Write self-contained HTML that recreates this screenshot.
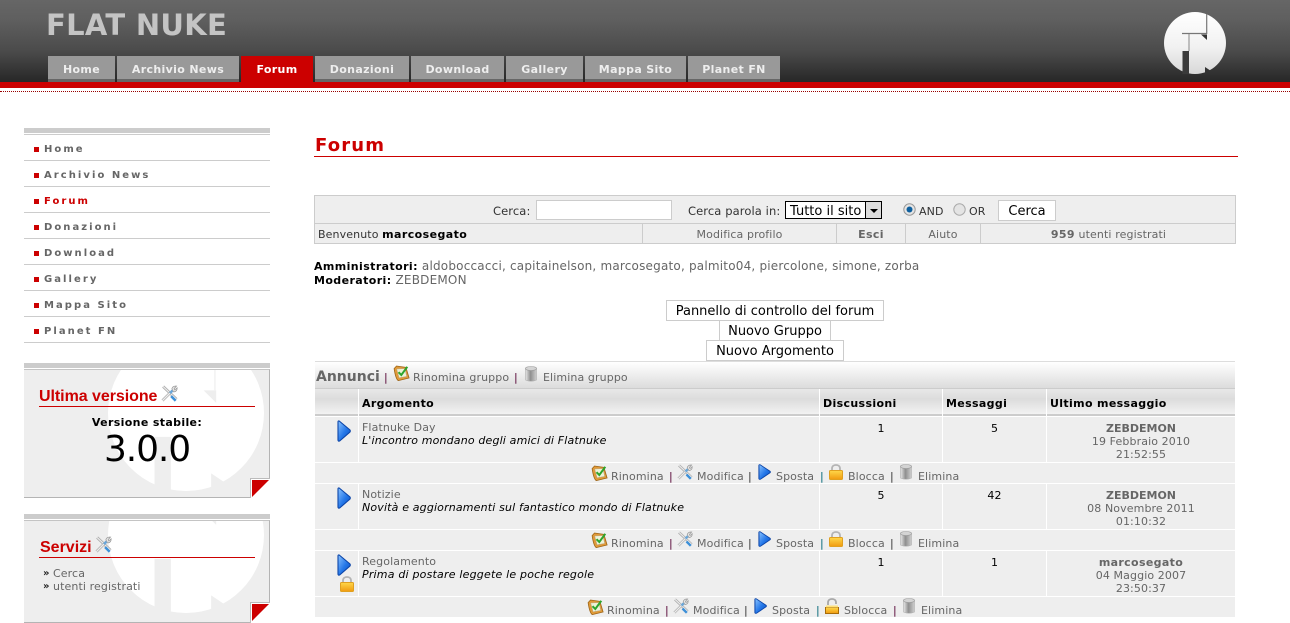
<!DOCTYPE html>
<html lang="it"><head><meta charset="utf-8"><title>Forum - Flat Nuke</title>
<style>
html,body{margin:0;padding:0;background:#fff;width:1290px;height:623px;overflow:hidden}
body{position:relative;font-family:"DejaVu Sans",Verdana,sans-serif;font-size:11px;color:#000;letter-spacing:.11px}
b{letter-spacing:.35px}
.t{position:absolute;white-space:nowrap;line-height:14px;margin-top:1px}
.g{color:#666}
.i{font-style:italic;letter-spacing:.16px}
.tab{position:absolute;top:56px;height:26px;background:linear-gradient(#999 23px,#666 23px);color:#eee;font-weight:bold;font-size:11px;line-height:28px;text-align:center;letter-spacing:.35px}
.tab.on{background:#c00;color:#fff}
.m{position:absolute;left:24px;width:246px;height:1px;background:#ccc}
.mt{position:absolute;left:44px;font-weight:bold;font-size:10px;letter-spacing:2.05px;color:#666;line-height:14px;white-space:nowrap;margin-top:2px}
.b{position:absolute;left:34px;width:5px;height:5px;background:#c00}
.btn{position:absolute;background:#fff;border:1px solid #ccc;box-sizing:border-box;font-size:13px;line-height:21px;text-align:center;height:21px;white-space:nowrap;letter-spacing:0}
.r{position:absolute;left:315px;width:920px;background:#eee}
.v{position:absolute;width:1px;background:#fff}
.c{position:absolute;text-align:center;line-height:13px;color:#666;white-space:nowrap;margin-top:1px}
.act{position:absolute;left:0;width:1290px;height:20px;color:#666}
.act span{position:absolute;top:6px;line-height:14px;white-space:nowrap}
.act svg{position:absolute}
.p{color:#503}
.box{position:absolute;left:24px;width:246px;background:#eee;overflow:hidden;box-sizing:border-box;border-top:1px solid #c4c4c4;border-right:1px solid #b4b4b4;border-bottom:1px solid #b4b4b4}
.th{position:absolute;font-weight:bold;line-height:14px;white-space:nowrap;letter-spacing:.35px;margin-top:1px}
.lb{font-size:11.5px;letter-spacing:.1px;color:#333}
.u{font-size:12px;letter-spacing:.2px}
.u b{font-size:11px;letter-spacing:.4px;color:#000}
</style></head><body>
<svg width="0" height="0" style="position:absolute">
<defs>
<linearGradient id="bl" x1="0" x2="1" y1="0" y2="1"><stop offset="0" stop-color="#8cc4ff"/><stop offset=".55" stop-color="#2477e8"/><stop offset="1" stop-color="#0a4fc0"/></linearGradient>
<linearGradient id="yl" x1="0" x2="0" y1="0" y2="1"><stop offset="0" stop-color="#ffd84a"/><stop offset="1" stop-color="#f09a10"/></linearGradient>
<linearGradient id="tr" x1="0" x2="1" y1="0" y2="0"><stop offset="0" stop-color="#e8e8e8"/><stop offset=".45" stop-color="#8f8f8f"/><stop offset="1" stop-color="#cfcfcf"/></linearGradient>
<symbol id="arrow" viewBox="0 0 14 22"><path d="M2.2 1 L13 10 Q13.6 11 13 12 L2.6 21 Q1 21.6 1 20 L1 2 Q1 .6 2.2 1Z" fill="url(#bl)" stroke="#0c45a8" stroke-width="1.1"/></symbol>
<symbol id="lock" viewBox="0 0 14 16"><path d="M3 7V4.6C3 2 5 1 7 1s4 1 4 3.6V7" fill="none" stroke="#b4b4b4" stroke-width="1.8"/><rect x=".5" y="6.5" width="13" height="9" rx="1" fill="url(#yl)" stroke="#e0a020"/></symbol>
<symbol id="unlock" viewBox="0 0 14 16"><path d="M3 7V4.6C3 2 5 1 7 1s4 1 4 3.6V6" fill="none" stroke="#a8a8a8" stroke-width="1.8"/><path d="M.5 9.5h13v6H.5z" fill="url(#yl)" stroke="#a86c08"/><path d="M1 7.5h12v2H1z" fill="#ffe27a"/></symbol>
<symbol id="trash" viewBox="0 0 14 16"><path d="M1.5 2.5V14Q7 16.5 12.5 14V2.5Z" fill="url(#tr)" stroke="#b0b0b0" stroke-width=".6"/><ellipse cx="7" cy="2.5" rx="5.6" ry="2" fill="#d4d4d4" stroke="#9c9c9c" stroke-width=".6"/></symbol>
<symbol id="ren" viewBox="0 0 16 16"><path d="M.6 3.6 L3 1 L12.4 2.4 L15.6 13 L4.8 15.6 Q2.2 14.4 .6 3.6Z" fill="#e09a38" stroke="#9c6418" stroke-width=".8"/><path d="M3.2 4 L11.4 3.6 L13.2 11.4 L5.6 12.8Z" fill="#eef2d8" stroke="#b9a78a" stroke-width=".5"/><path d="M5 7.2 L7.8 10 L13.8 1.8" fill="none" stroke="#2da52d" stroke-width="2"/></symbol>
<symbol id="wr" viewBox="0 0 16 16"><path d="M2 1.4 L14.6 13.4" stroke="#aaa" stroke-width="2.6" fill="none"/><path d="M2 1.4 L14.6 13.4" stroke="#eee" stroke-width="1.1" fill="none"/><path d="M1.4 14.6 L9 7" stroke="#b4b4b4" stroke-width="2.6" fill="none"/><path d="M1.4 14.6 L9 7" stroke="#f0f0f0" stroke-width="1" fill="none"/><path d="M8.5 7.6 L10.8 5.2" stroke="#6aa6d8" stroke-width="2.4"/><path d="M10.2 3.6 Q11 .8 14.6 1 L12.4 3.4 L13 4.6 L15.2 2.6 Q15.4 6 12 6.6 Z" fill="#e8e8e8" stroke="#999" stroke-width=".7"/><path d="M9.5 10.5 L13.8 14.8" stroke="#3d90d8" stroke-width="2.4"/></symbol>
</defs>
</svg>

<!-- header -->
<div style="position:absolute;left:0;top:0;width:1290px;height:82px;background:linear-gradient(#666 0,#5f5f5f 20px,#4a4a4a 52px,#272727 82px)"></div>
<div style="position:absolute;left:0;top:82px;width:1290px;height:6px;background:#c00"></div>
<div style="position:absolute;left:0;top:91px;width:1290px;height:0;border-top:1px dotted #900"></div>
<div class="t" style="left:46px;top:6px;font-size:29px;line-height:36px;font-weight:bold;color:#c4c4c4;letter-spacing:.3px">FLAT NUKE</div>
<div class="tab" style="left:48px;width:67px">Home</div>
<div class="tab" style="left:117px;width:122px">Archivio News</div>
<div class="tab on" style="left:241px;width:72px">Forum</div>
<div class="tab" style="left:315px;width:94px">Donazioni</div>
<div class="tab" style="left:411px;width:93px">Download</div>
<div class="tab" style="left:506px;width:77px">Gallery</div>
<div class="tab" style="left:585px;width:101px">Mappa Sito</div>
<div class="tab" style="left:688px;width:92px">Planet FN</div>
<svg style="position:absolute;left:1164px;top:12px" width="62" height="62" viewBox="-31 -31 62 62">
<defs><linearGradient id="lg" x1="0" x2="0" y1="0" y2="1"><stop offset="0" stop-color="#fff"/><stop offset=".55" stop-color="#f2f2f2"/><stop offset="1" stop-color="#d8d8d8"/></linearGradient></defs>
<circle r="31" fill="url(#lg)"/>
<path d="M-12.5 8H-6V32H-12.5Z" fill="#3a3a3a"/>
<path d="M-13 -9.5H11.7V-29" fill="none" stroke="#777" stroke-width="1.2"/>
<path d="M-6 -9V8" stroke="#888" stroke-width="1"/>
<path d="M6 -8.5H12V-3Z" fill="#333"/>
<path d="M10 24 L10 31 L16 28Z" fill="#333"/>
</svg>

<!-- left menu -->
<div class="m" style="top:128px;height:5px"></div>
<div class="m" style="top:134px"></div>
<div class="b" style="top:147px"></div><div class="mt" style="top:141px">Home</div><div class="m" style="top:160px"></div>
<div class="b" style="top:173px"></div><div class="mt" style="top:167px">Archivio News</div><div class="m" style="top:186px"></div>
<div class="b" style="top:199px"></div><div class="mt" style="top:193px;color:#c00">Forum</div><div class="m" style="top:212px"></div>
<div class="b" style="top:225px"></div><div class="mt" style="top:219px">Donazioni</div><div class="m" style="top:238px"></div>
<div class="b" style="top:251px"></div><div class="mt" style="top:245px">Download</div><div class="m" style="top:264px"></div>
<div class="b" style="top:277px"></div><div class="mt" style="top:271px">Gallery</div><div class="m" style="top:290px"></div>
<div class="b" style="top:303px"></div><div class="mt" style="top:297px">Mappa Sito</div><div class="m" style="top:316px"></div>
<div class="b" style="top:329px"></div><div class="mt" style="top:323px">Planet FN</div><div class="m" style="top:342px"></div>

<!-- block 1 -->
<div class="m" style="top:363px;height:5px"></div>
<div class="box" style="top:369px;height:129px">
<svg style="position:absolute;left:84px;top:-35px" width="156" height="156" viewBox="-31 -31 62 62"><circle r="31" fill="#fff"/><path d="M-12.5 9.5H-6V32H-12.5Z" fill="#eee"/><path d="M11.5 -31V-9" stroke="#eee" stroke-width=".5"/><path d="M7 -9H12V-4Z" fill="#eee"/><path d="M10 24V31L16 28Z" fill="#eee"/></svg>
</div>
<div style="position:absolute;left:250px;top:478px;width:20px;height:20px;background:#fff;box-sizing:border-box;border-left:1px solid #bbb;border-top:1px solid #bbb"></div>
<svg style="position:absolute;left:252px;top:480px" width="17" height="17"><path d="M0 0H17L0 17Z" fill="#c00"/></svg>
<div class="t" style="left:39px;top:386px;font:bold 16px/19px 'Liberation Sans',Arial,sans-serif;color:#c00;letter-spacing:-.05px">Ultima versione</div>
<svg style="position:absolute;left:161px;top:385px" width="17" height="17"><use href="#wr"/></svg>
<div style="position:absolute;left:39px;top:406px;width:216px;height:1px;background:#c00"></div>
<div class="t" style="left:24px;width:246px;text-align:center;top:415px;font-weight:bold;letter-spacing:.35px">Versione stabile:</div>
<div class="t" style="left:24px;width:246px;text-align:center;top:428px;font-size:36px;line-height:42px;color:#000;letter-spacing:-1.1px">3.0.0</div>

<!-- block 2 -->
<div class="m" style="top:514px;height:5px"></div>
<div class="box" style="top:520px;height:103px">
<svg style="position:absolute;left:84px;top:-64px" width="156" height="156" viewBox="-31 -31 62 62"><circle r="31" fill="#fff"/><path d="M-12.5 9.5H-6V32H-12.5Z" fill="#eee"/><path d="M11.5 -31V-9" stroke="#eee" stroke-width="1.2"/><path d="M7 -9H12V-4Z" fill="#eee"/><path d="M10 24V31L16 28Z" fill="#eee"/></svg>
</div>
<div style="position:absolute;left:250px;top:602px;width:20px;height:21px;background:#fff;box-sizing:border-box;border-left:1px solid #bbb;border-top:1px solid #bbb"></div>
<svg style="position:absolute;left:252px;top:604px" width="17" height="17"><path d="M0 0H17L0 17Z" fill="#c00"/></svg>
<div class="t" style="left:40px;top:537px;font:bold 16px/19px 'Liberation Sans',Arial,sans-serif;color:#c00;letter-spacing:0">Servizi</div>
<svg style="position:absolute;left:95px;top:536px" width="17" height="17"><use href="#wr"/></svg>
<div style="position:absolute;left:39px;top:557px;width:216px;height:1px;background:#c00"></div>
<div class="t" style="left:43px;top:566px;color:#222;font-size:10px;font-weight:bold">»</div><div class="t g" style="left:53px;top:566px">Cerca</div>
<div class="t" style="left:43px;top:579px;color:#222;font-size:10px;font-weight:bold">»</div><div class="t g" style="left:53px;top:579px">utenti registrati</div>

<!-- main title -->
<div class="t" style="left:315px;top:134px;font-size:18px;line-height:22px;font-weight:bold;color:#c00;letter-spacing:1.15px">Forum</div>
<div style="position:absolute;left:314px;top:156px;width:924px;height:1px;background:#c00"></div>

<!-- search table -->
<div style="position:absolute;left:314px;top:195px;width:922px;height:49px;background:#eee;border:1px solid #ccc;box-sizing:border-box"></div>
<div style="position:absolute;left:314px;top:223px;width:922px;height:1px;background:#ccc"></div>
<div style="position:absolute;left:642px;top:223px;width:1px;height:20px;background:#ccc"></div>
<div style="position:absolute;left:836px;top:223px;width:1px;height:20px;background:#ccc"></div>
<div style="position:absolute;left:905px;top:223px;width:1px;height:20px;background:#ccc"></div>
<div style="position:absolute;left:980px;top:223px;width:1px;height:20px;background:#ccc"></div>
<div class="t lb" style="left:493px;top:203px">Cerca:</div>
<div style="position:absolute;left:536px;top:200px;width:136px;height:20px;background:#fff;border:1px solid #ccc;box-sizing:border-box"></div>
<div class="t lb" style="left:688px;top:203px">Cerca parola in:</div>
<div style="position:absolute;left:785px;top:201px;width:97px;height:18px;background:#fff;border:1px solid #000;box-sizing:border-box;font-size:13px;line-height:19px;padding-left:4px;letter-spacing:0">Tutto il sito
<div style="position:absolute;right:0;top:0;width:16px;height:16px;background:#ddd;border-left:1px solid #000;box-sizing:border-box"><div style="position:absolute;left:4px;top:7px;border:4px solid transparent;border-top:4px solid #000;border-bottom:0"></div></div></div>
<svg style="position:absolute;left:903px;top:203px" width="13" height="13"><circle cx="6.5" cy="6.5" r="5.7" fill="#e4e4e4" stroke="#999"/><circle cx="6.5" cy="6.5" r="3" fill="#0d5f9e"/></svg>
<div class="t" style="left:919px;top:204px;color:#333">AND</div>
<svg style="position:absolute;left:953px;top:203px" width="13" height="13"><circle cx="6.5" cy="6.5" r="5.7" fill="#e4e4e4" stroke="#aaa"/></svg>
<div class="t" style="left:969px;top:204px;color:#333">OR</div>
<div class="btn" style="left:998px;top:200px;width:58px">Cerca</div>
<div class="t" style="left:318px;top:227px;color:#333">Benvenuto <b style="color:#000;letter-spacing:.42px">marcosegato</b></div>
<div class="t g" style="left:643px;width:193px;text-align:center;top:227px">Modifica profilo</div>
<div class="t g" style="left:837px;width:68px;text-align:center;top:227px"><b>Esci</b></div>
<div class="t g" style="left:906px;width:74px;text-align:center;top:227px">Aiuto</div>
<div class="t g" style="left:981px;width:255px;text-align:center;top:227px"><b>959</b> utenti registrati</div>

<div class="t g u" style="left:314px;top:258px"><b>Amministratori:</b> aldoboccacci, capitainelson, marcosegato, palmito04, piercolone, simone, zorba</div>
<div class="t g u" style="left:314px;top:272px"><b>Moderatori:</b> ZEBDEMON</div>

<div class="btn" style="left:666px;top:300px;width:218px">Pannello di controllo del forum</div>
<div class="btn" style="left:719px;top:320px;width:112px">Nuovo Gruppo</div>
<div class="btn" style="left:706px;top:340px;width:138px">Nuovo Argomento</div>

<!-- group head -->
<div style="position:absolute;left:315px;top:361px;width:920px;height:1px;background:#ddd"></div>
<div style="position:absolute;left:315px;top:362px;width:920px;height:26px;background:linear-gradient(#fff,#dcdcdc)"></div>
<div style="position:absolute;left:315px;top:388px;width:920px;height:1px;background:#ccc"></div>
<div class="t" style="left:316px;top:368px;font-size:14px;line-height:16px;font-weight:bold;color:#666;letter-spacing:0">Annunci</div>
<div class="t p" style="left:384px;top:370px">|</div>
<svg style="position:absolute;left:393px;top:365px" width="17" height="16"><use href="#ren"/></svg>
<div class="t g" style="left:413px;top:370px">Rinomina gruppo</div>
<div class="t p" style="left:514px;top:370px">|</div>
<svg style="position:absolute;left:524px;top:366px" width="14" height="16"><use href="#trash"/></svg>
<div class="t g" style="left:543px;top:370px">Elimina gruppo</div>

<!-- table head -->
<div style="position:absolute;left:315px;top:389px;width:920px;height:25px;background:linear-gradient(#e8e8e8,#dcdcdc 40%,#f2f2f2)"></div>
<div style="position:absolute;left:315px;top:414px;width:920px;height:2px;background:#ccc"></div>
<div class="v" style="left:358px;top:389px;height:27px"></div>
<div class="v" style="left:819px;top:389px;height:27px"></div>
<div class="v" style="left:942px;top:389px;height:27px"></div>
<div class="v" style="left:1046px;top:389px;height:27px"></div>
<div class="th" style="left:362px;top:396px">Argomento</div>
<div class="th" style="left:823px;top:396px">Discussioni</div>
<div class="th" style="left:946px;top:396px">Messaggi</div>
<div class="th" style="left:1050px;top:396px">Ultimo messaggio</div>

<!-- rows -->
<div class="r" style="top:417px;height:45px"></div>
<div class="r" style="top:463px;height:20px"></div>
<div class="r" style="top:484px;height:45px"></div>
<div class="r" style="top:530px;height:20px"></div>
<div class="r" style="top:551px;height:45px"></div>
<div class="r" style="top:597px;height:20px"></div>
<div class="v" style="left:358px;top:417px;height:45px"></div><div class="v" style="left:819px;top:417px;height:45px"></div><div class="v" style="left:942px;top:417px;height:45px"></div><div class="v" style="left:1046px;top:417px;height:45px"></div>
<div class="v" style="left:358px;top:484px;height:45px"></div><div class="v" style="left:819px;top:484px;height:45px"></div><div class="v" style="left:942px;top:484px;height:45px"></div><div class="v" style="left:1046px;top:484px;height:45px"></div>
<div class="v" style="left:358px;top:551px;height:45px"></div><div class="v" style="left:819px;top:551px;height:45px"></div><div class="v" style="left:942px;top:551px;height:45px"></div><div class="v" style="left:1046px;top:551px;height:45px"></div>

<svg style="position:absolute;left:337px;top:420px" width="14" height="22"><use href="#arrow"/></svg>
<div class="t g" style="left:362px;top:420px;line-height:13px">Flatnuke Day</div>
<div class="t i" style="left:362px;top:433px;line-height:13px">L'incontro mondano degli amici di Flatnuke</div>
<div class="c" style="left:820px;width:122px;top:421px;color:#000">1</div>
<div class="c" style="left:943px;width:103px;top:421px;color:#000">5</div>
<div class="c" style="left:1047px;width:188px;top:421px"><b style="letter-spacing:0">ZEBDEMON</b><br>19 Febbraio 2010<br>21:52:55</div>

<svg style="position:absolute;left:337px;top:487px" width="14" height="22"><use href="#arrow"/></svg>
<div class="t g" style="left:362px;top:487px;line-height:13px">Notizie</div>
<div class="t i" style="left:362px;top:500px;line-height:13px">Novità e aggiornamenti sul fantastico mondo di Flatnuke</div>
<div class="c" style="left:820px;width:122px;top:488px;color:#000">5</div>
<div class="c" style="left:943px;width:103px;top:488px;color:#000">42</div>
<div class="c" style="left:1047px;width:188px;top:488px"><b style="letter-spacing:0">ZEBDEMON</b><br>08 Novembre 2011<br>01:10:32</div>

<svg style="position:absolute;left:337px;top:554px" width="14" height="22"><use href="#arrow"/></svg>
<svg style="position:absolute;left:340px;top:576px" width="14" height="16"><use href="#lock"/></svg>
<div class="t g" style="left:362px;top:554px;line-height:13px">Regolamento</div>
<div class="t i" style="left:362px;top:567px;line-height:13px;letter-spacing:.2px">Prima di postare leggete le poche regole</div>
<div class="c" style="left:820px;width:122px;top:555px;color:#000">1</div>
<div class="c" style="left:943px;width:103px;top:555px;color:#000">1</div>
<div class="c" style="left:1047px;width:188px;top:555px"><b>marcosegato</b><br>04 Maggio 2007<br>23:50:37</div>

<!-- action rows -->
<div class="act" style="top:464px">
<svg style="left:591px;top:1px" width="17" height="16"><use href="#ren"/></svg><span style="left:611px">Rinomina</span><span class="p" style="left:669px">|</span>
<svg style="left:677px;top:0" width="16" height="16"><use href="#wr"/></svg><span style="left:697px">Modifica</span><span style="left:748px;color:#333">|</span>
<svg style="left:758px;top:0" width="13" height="16" viewBox="0 0 14 22" preserveAspectRatio="none"><use href="#arrow"/></svg><span style="left:776px">Sposta</span><span style="left:820px;color:#067">|</span>
<svg style="left:829px;top:0" width="14" height="16"><use href="#lock"/></svg><span style="left:848px">Blocca</span><span style="left:890px;color:#333">|</span>
<svg style="left:899px;top:0" width="14" height="16"><use href="#trash"/></svg><span style="left:918px">Elimina</span>
</div>
<div class="act" style="top:531px">
<svg style="left:591px;top:1px" width="17" height="16"><use href="#ren"/></svg><span style="left:611px">Rinomina</span><span class="p" style="left:669px">|</span>
<svg style="left:677px;top:0" width="16" height="16"><use href="#wr"/></svg><span style="left:697px">Modifica</span><span style="left:748px;color:#333">|</span>
<svg style="left:758px;top:0" width="13" height="16" viewBox="0 0 14 22" preserveAspectRatio="none"><use href="#arrow"/></svg><span style="left:776px">Sposta</span><span style="left:820px;color:#067">|</span>
<svg style="left:829px;top:0" width="14" height="16"><use href="#lock"/></svg><span style="left:848px">Blocca</span><span style="left:890px;color:#333">|</span>
<svg style="left:899px;top:0" width="14" height="16"><use href="#trash"/></svg><span style="left:918px">Elimina</span>
</div>
<div class="act" style="top:598px">
<svg style="left:587px;top:1px" width="17" height="16"><use href="#ren"/></svg><span style="left:607px">Rinomina</span><span class="p" style="left:665px">|</span>
<svg style="left:673px;top:0" width="16" height="16"><use href="#wr"/></svg><span style="left:693px">Modifica</span><span style="left:744px;color:#333">|</span>
<svg style="left:754px;top:0" width="13" height="16" viewBox="0 0 14 22" preserveAspectRatio="none"><use href="#arrow"/></svg><span style="left:772px">Sposta</span><span style="left:816px;color:#067">|</span>
<svg style="left:825px;top:0" width="14" height="16"><use href="#unlock"/></svg><span style="left:844px">Sblocca</span><span class="p" style="left:893px">|</span>
<svg style="left:902px;top:0" width="14" height="16"><use href="#trash"/></svg><span style="left:921px">Elimina</span>
</div>
</body></html>
